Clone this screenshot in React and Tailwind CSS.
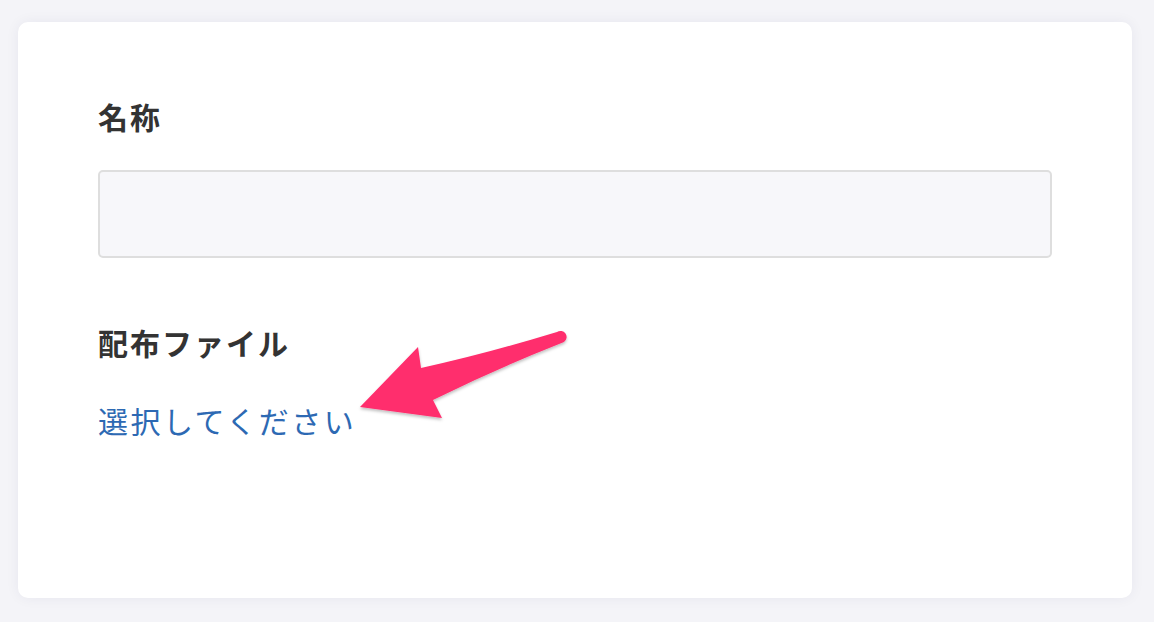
import React from 'react';

const ArrowMark = () => (
  <svg
    className="absolute left-0 top-0 pointer-events-none"
    width="1154"
    height="622"
    viewBox="0 0 1154 622"
  >
    <defs>
      <filter id="sh" x="-20%" y="-20%" width="140%" height="140%">
        <feDropShadow dx="0" dy="2" stdDeviation="1.5" floodColor="#000" floodOpacity="0.25" />
      </filter>
    </defs>
    <path
      d="M 360 407 L 418 347 L 421 368 Q 485 354 557 332 A 5 5 0 0 1 564 342 Q 498 368 433 400 L 442 418 Z"
      fill="#ff2d6d"
      filter="url(#sh)"
    />
  </svg>
);

export default function App() {
  return (
    <div
      className="relative w-[1154px] h-[622px] bg-[#f4f4f8] pt-[22px] pl-[18px] pr-[22px]"
      style={{ fontFamily: '"Noto Sans CJK JP", "Noto Sans", sans-serif' }}
    >
      <div className="bg-white rounded-[10px] shadow-[0_0_14px_rgba(40,40,90,0.06)] h-[576px] px-[80px] pt-[74px]">
        <h2 className="text-[30px] leading-[40px] font-bold text-[#333] tracking-[2px]">名称</h2>
        <div className="mt-[34px] h-[88px] rounded-[5px] border-2 border-[#dedede] bg-[#f7f7fa]" />
        <h2 className="mt-[64px] text-[30px] leading-[40px] font-bold text-[#333] tracking-[2px]">配布ファイル</h2>
        <a className="block mt-[38px] text-[30px] leading-[40px] text-[#2d69b3] tracking-[2.5px]">選択してください</a>
      </div>
      <ArrowMark />
    </div>
  );
}
